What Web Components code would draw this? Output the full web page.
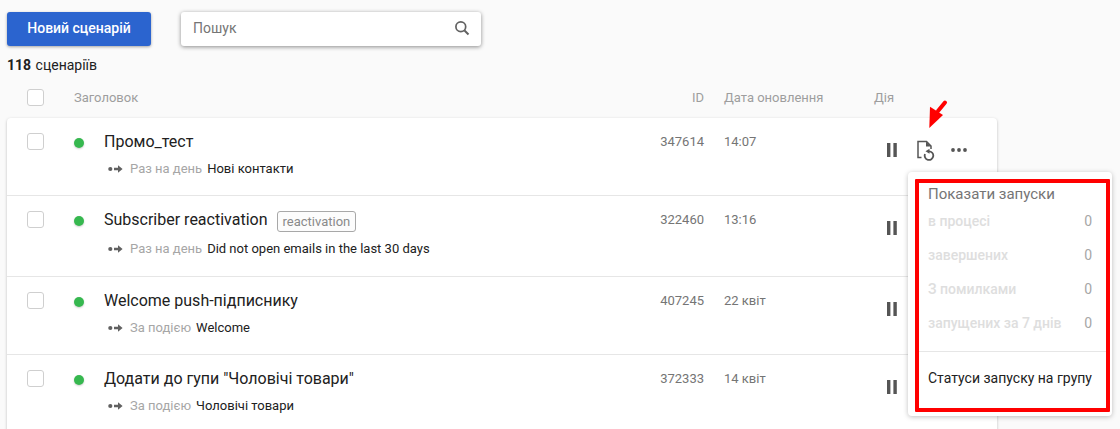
<!DOCTYPE html>
<html lang="uk">
<head>
<meta charset="utf-8">
<title>Сценарії</title>
<style>
html, body { margin: 0; height: 429px; overflow: hidden; background: #fafafa; }
body { font-family: Roboto, "Liberation Sans", sans-serif; color: #212121; }
</style>
</head>
<body>
<scenario-page>
    <scenario-row name="Промо_тест" trigger="Раз на день" target="Нові контакти" item-id="347614" date="14:07" height="78" arrow></scenario-row>
    <scenario-row name="Subscriber reactivation" tag="reactivation" trigger="Раз на день" target="Did not open emails in the last 30 days" item-id="322460" date="13:16" height="81"></scenario-row>
    <scenario-row name="Welcome push-підписнику" trigger="За подією" target="Welcome" item-id="407245" date="22 квіт" height="78"></scenario-row>
    <scenario-row name='Додати до гупи "Чоловічі товари"' trigger="За подією" target="Чоловічі товари" item-id="372333" date="14 квіт" height="78"></scenario-row>
</scenario-page>
<run-menu></run-menu>

<script>
class CheckBox extends HTMLElement {
    constructor() {
        super();
        this.attachShadow({ mode: 'open' }).innerHTML = `
        <style>
            :host {
                display: block;
                flex: none;
                box-sizing: border-box;
                width: 17px;
                height: 17px;
                background: #fff;
                border: 1px solid #cfcfcf;
                border-radius: 3px;
            }
        </style>`;
    }
}

class ScenarioPage extends HTMLElement {
    constructor() {
        super();
        this.attachShadow({ mode: 'open' }).innerHTML = `
        <style>
            :host { display: block; padding: 12px 0 0 7px; width: 990px; }
            .toolbar { display: flex; gap: 30px; height: 34px; }
            .new-btn {
                width: 144px;
                background: #2b64cf;
                color: #fff;
                font-size: 14px;
                font-weight: 500;
                border-radius: 3px;
                box-shadow: 0 1px 3px rgba(0,0,0,.35);
                display: flex;
                align-items: center;
                justify-content: center;
                padding-bottom: 3px;
                box-sizing: border-box;
            }
            .search {
                width: 300px;
                background: #fff;
                border-radius: 3px;
                box-shadow: 0 1px 4px rgba(0,0,0,.45);
                display: flex;
                align-items: center;
                justify-content: space-between;
                padding: 0 11px 2px 12px;
                box-sizing: border-box;
                color: #757575;
                font-size: 14px;
            }
            .count { font-size: 14px; margin-top: 11px; line-height: 16px; color: #212121; }
            .count b { font-weight: 700; margin-right: 1px; }
            .head {
                display: flex;
                align-items: center;
                height: 18px;
                margin-top: 15px;
                font-size: 13px;
                color: #9e9e9e;
                padding-left: 20px;
            }
            .title { margin-left: 30px; width: 564px; }
            .id { width: 66px; text-align: right; }
            .date { margin-left: 20px; width: 150px; }
            .card {
                margin-top: 12px;
                background: #fff;
                border-radius: 4px;
                box-shadow: 0 1px 3px rgba(0,0,0,.25);
                height: 330px;
            }
        </style>
        <div class="toolbar">
            <div class="new-btn">Новий сценарій</div>
            <div class="search">
                <span>Пошук</span>
                <svg width="16" height="16" viewBox="0 0 16 16" fill="none" stroke="#616161" stroke-width="1.7">
                    <circle cx="6.8" cy="6.8" r="4.9"/><path d="M10.5 10.5l4 4" stroke-width="2"/>
                </svg>
            </div>
        </div>
        <div class="count"><b>118</b> сценаріїв</div>
        <div class="head">
            <check-box></check-box>
            <span class="title">Заголовок</span>
            <span class="id">ID</span>
            <span class="date">Дата оновлення</span>
            <span>Дія</span>
        </div>
        <div class="card"><slot></slot></div>`;
    }
}

class ScenarioRow extends HTMLElement {
    constructor() {
        super();
        this.shadow = this.attachShadow({ mode: 'open' });
    }

    attr(name) {
        return this.getAttribute(name) || '';
    }

    connectedCallback() {
        const tag = this.attr('tag') ? `<span class="tag">${this.attr('tag')}</span>` : '';
        const arrow = this.hasAttribute('arrow') ? `
            <svg class="pointer" width="24" height="32" viewBox="0 0 24 32">
                <path d="M20 4.500 13 13" stroke="#f00" stroke-width="4" stroke-linecap="round"/>
                <path d="M5 8.700 18 17 4.300 30Z" fill="#f00"/>
            </svg>` : '';
        this.shadow.innerHTML = `
        <style>
            :host {
                display: flex;
                box-sizing: border-box;
                height: ${this.attr('height')}px;
                border-bottom: 1px solid #e6e6e6;
                padding: 14px 0 0 20px;
                position: relative;
            }
            :host(:last-child) { border-bottom: 0; }
            check-box { margin-top: 1px; }
            .dot {
                width: 10px;
                height: 10px;
                margin: 6px 20px 0 30px;
                border-radius: 50%;
                background: #36b84f;
                box-shadow: 0 1px 2px rgba(0,0,0,.2);
                flex: none;
            }
            .main { width: 530px; flex: none; }
            .name { font-size: 16px; line-height: 20px; color: #212121; display: flex; align-items: flex-start; white-space: nowrap; }
            .tag {
                margin: 1px 0 0 9px;
                padding: 0 5px;
                height: 21px;
                line-height: 19px;
                box-sizing: border-box;
                border: 1px solid #a8a8a8;
                border-radius: 3px;
                color: #8a8a8a;
                font-size: 13px;
                background: #fcfcfc;
            }
            .sub {
                display: flex;
                align-items: center;
                margin-top: 9px;
                margin-left: 4px;
                font-size: 13px;
                line-height: 16px;
                white-space: nowrap;
            }
            .sub svg { margin-right: 7px; }
            .trigger { color: #a6a6a6; margin-right: 5px; }
            .target { color: #212121; }
            .id { width: 70px; text-align: right; font-size: 13px; line-height: 16px; color: #757575; padding-top: 2px; flex: none; }
            .date { margin-left: 20px; width: 150px; font-size: 13px; line-height: 16px; color: #757575; padding-top: 2px; flex: none; }
            .actions { display: flex; align-items: center; height: 20px; margin-top: 8px; margin-left: 13px; }
            .doc { margin: 0 15px 0 20px; }
            .pointer { position: absolute; left: 918px; top: -20px; }
        </style>
        <check-box></check-box>
        <span class="dot"></span>
        <div class="main">
            <div class="name">${this.attr('name')}${tag}</div>
            <div class="sub">
                <svg width="15" height="8" viewBox="0 0 15 8" fill="#616161">
                    <circle cx="2.300" cy="4" r="2.100"/><path d="M6 2.800h4V.2L14.600 4 10 7.800V5.200H6z"/>
                </svg>
                <span class="trigger">${this.attr('trigger')}</span>
                <span class="target">${this.attr('target')}</span>
            </div>
        </div>
        <div class="id">${this.attr('item-id')}</div>
        <div class="date">${this.attr('date')}</div>
        <div class="actions">
            <svg width="10" height="14" viewBox="0 0 10 14" fill="#555"><rect x="0" y="0" width="3.400" height="14"/><rect x="6.400" y="0" width="3.400" height="14"/></svg>
            <svg class="doc" width="19" height="21" viewBox="0 0 19 21" fill="none" stroke="#555" stroke-width="1.500">
                <path d="M4.500 17.500H1V1.500h8.500L14 6V9"/>
                <path d="M9 1.500l5 5H9z" fill="#555" stroke="none"/>
                <path d="M12 11.300A4.300 4.300 0 1 1 8 14" stroke-width="1.800"/>
                <path d="M8.500 11.300 12.500 8.800v5z" fill="#555" stroke="none"/>
            </svg>
            <svg width="16" height="4" viewBox="0 0 16 4" fill="#555"><circle cx="2" cy="2" r="1.900"/><circle cx="8" cy="2" r="1.900"/><circle cx="14" cy="2" r="1.900"/></svg>
        </div>
        ${arrow}`;
    }
}

class RunMenu extends HTMLElement {
    constructor() {
        super();
        const rows = [['в процесі', 0], ['завершених', 0], ['З помилками', 0], ['запущених за 7 днів', 0]];
        this.attachShadow({ mode: 'open' }).innerHTML = `
        <style>
            :host {
                position: absolute;
                left: 908px;
                top: 172px;
                width: 204px;
                height: 244px;
                box-sizing: border-box;
                background: #fff;
                border-radius: 4px;
                box-shadow: 0 1px 5px rgba(0,0,0,.25);
                padding: 7px 0 0 7px;
            }
            .frame {
                box-sizing: border-box;
                width: 195px;
                height: 233px;
                border: 4px solid #f00;
                border-radius: 1px;
            }
            .title { font-size: 15px; line-height: 18px; color: #757575; padding: 2px 0 0 9px; height: 27px; }
            .row { display: flex; justify-content: space-between; font-size: 14px; line-height: 18px; height: 34px; color: #dedede; padding: 0 14px 0 9px; font-weight: 500; }
            .row span { font-weight: 400; color: #a6a6a6; }
            hr { border: 0; border-top: 1px solid #e6e6e6; margin: 3px 0 0; height: 0; }
            .group { font-size: 14px; line-height: 18px; color: #212121; padding: 17px 0 0 9px; white-space: nowrap; }
        </style>
        <div class="frame">
            <div class="title">Показати запуски</div>
            ${rows.map(r => `<div class="row">${r[0]}<span>${r[1]}</span></div>`).join('')}
            <hr>
            <div class="group">Статуси запуску на групу</div>
        </div>`;
    }
}

customElements.define('check-box', CheckBox);
customElements.define('scenario-page', ScenarioPage);
customElements.define('scenario-row', ScenarioRow);
customElements.define('run-menu', RunMenu);
</script>
</body>
</html>
